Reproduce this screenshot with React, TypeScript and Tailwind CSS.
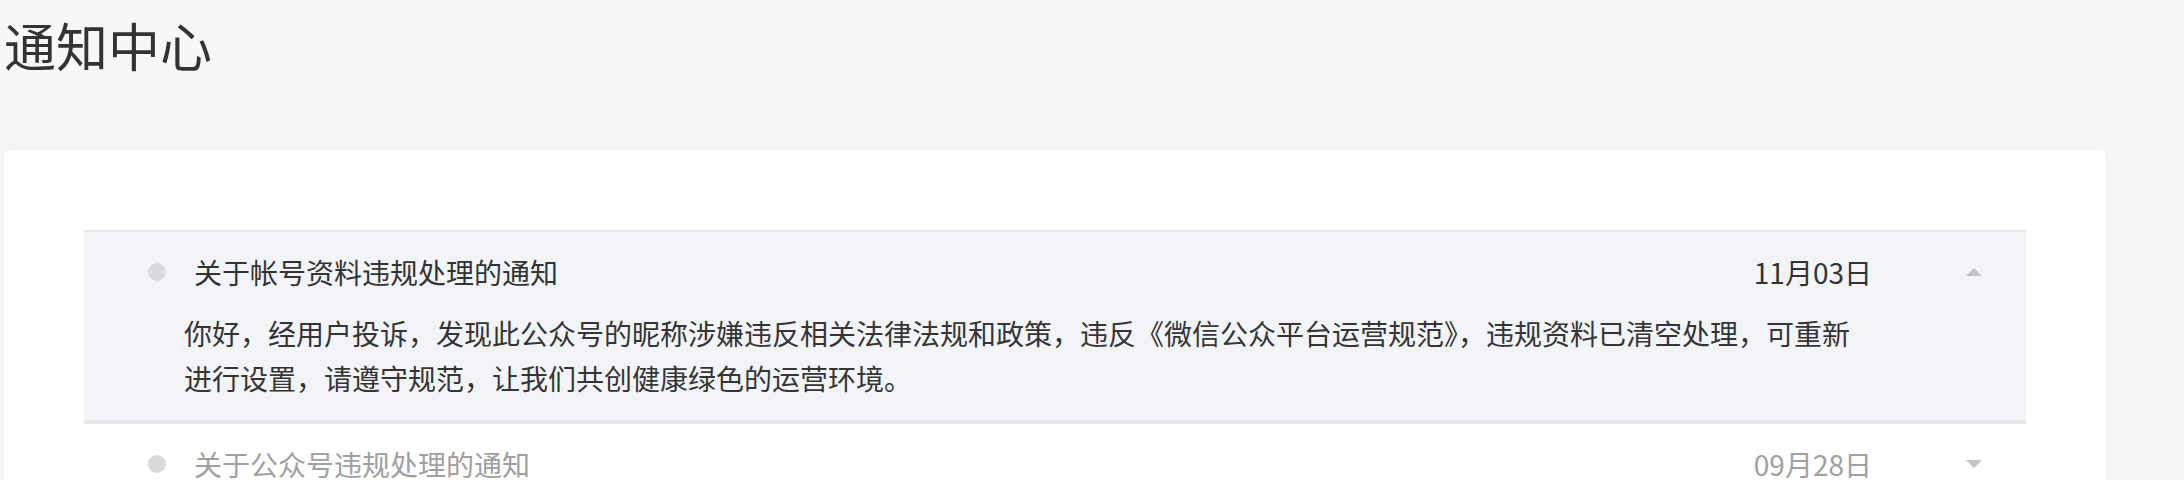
import React from "react";

const FONT = '"Noto Sans CJK SC", "Noto Sans", sans-serif';

function TriUp() {
  return (
    <svg width="16" height="8" viewBox="0 0 16 8" className="block">
      <polygon points="8,0 16,8 0,8" fill="#c4c4c4" />
    </svg>
  );
}
function TriDown() {
  return (
    <svg width="16" height="8" viewBox="0 0 16 8" className="block">
      <polygon points="0,0 16,0 8,8" fill="#c4c4c4" />
    </svg>
  );
}

type Item = { title: string; date: string; body?: string; open: boolean };

const items: Item[] = [
  {
    title: "关于帐号资料违规处理的通知",
    date: "11月03日",
    open: true,
    body:
      "你好，经用户投诉，发现此公众号的昵称涉嫌违反相关法律法规和政策，违反《微信公众平台运营规范》，违规资料已清空处理，可重新进行设置，请遵守规范，让我们共创健康绿色的运营环境。",
  },
  { title: "关于公众号违规处理的通知", date: "09月28日", open: false },
  { title: "关于公众号违规处理的通知", date: "09月20日", open: false },
];

export default function App() {
  return (
    <div
      className="min-h-[480px] bg-[#f6f7f9] pl-[4px] pr-[78px]"
      style={{ fontFamily: FONT }}
    >
      <h1 className="text-[52px] leading-[90px] font-normal text-[#333333]">通知中心</h1>
      <div className="mt-[60px] rounded-md bg-white p-[80px] shadow-[0_0_10px_rgba(0,0,0,0.035)]">
        <ul>
          {items.map((it, i) => (
            <li
              key={i}
              className={
                "border-t-2 border-[#e6e7eb] pt-[20px] " +
                (it.open ? "bg-[#f3f4f8] pb-[19px] border-b-2" : "pb-[20px]")
              }
            >
              <div className="flex h-[40px] items-center pl-[64px] pr-[44px]">
                <span className="h-[18px] w-[18px] shrink-0 rounded-full bg-[#d9d9d9]" />
                <span
                  className={
                    "ml-[28px] flex-1 text-[28px] leading-[40px] " +
                    (it.open ? "text-[#333333]" : "text-[#a0a0a0]")
                  }
                >
                  {it.title}
                </span>
                <span
                  className={
                    "text-[28px] leading-[40px] " +
                    (it.open ? "text-[#333333]" : "text-[#a0a0a0]")
                  }
                >
                  {it.date}
                </span>
                <span className="ml-[94px] flex w-[16px] justify-center">
                  {it.open ? <TriUp /> : <TriDown />}
                </span>
              </div>
              {it.open && it.body && (
                <p className="ml-[100px] mr-[154px] mt-[19px] text-[28px] leading-[45px] text-[#353535]">
                  {it.body}
                </p>
              )}
            </li>
          ))}
        </ul>
      </div>
    </div>
  );
}
